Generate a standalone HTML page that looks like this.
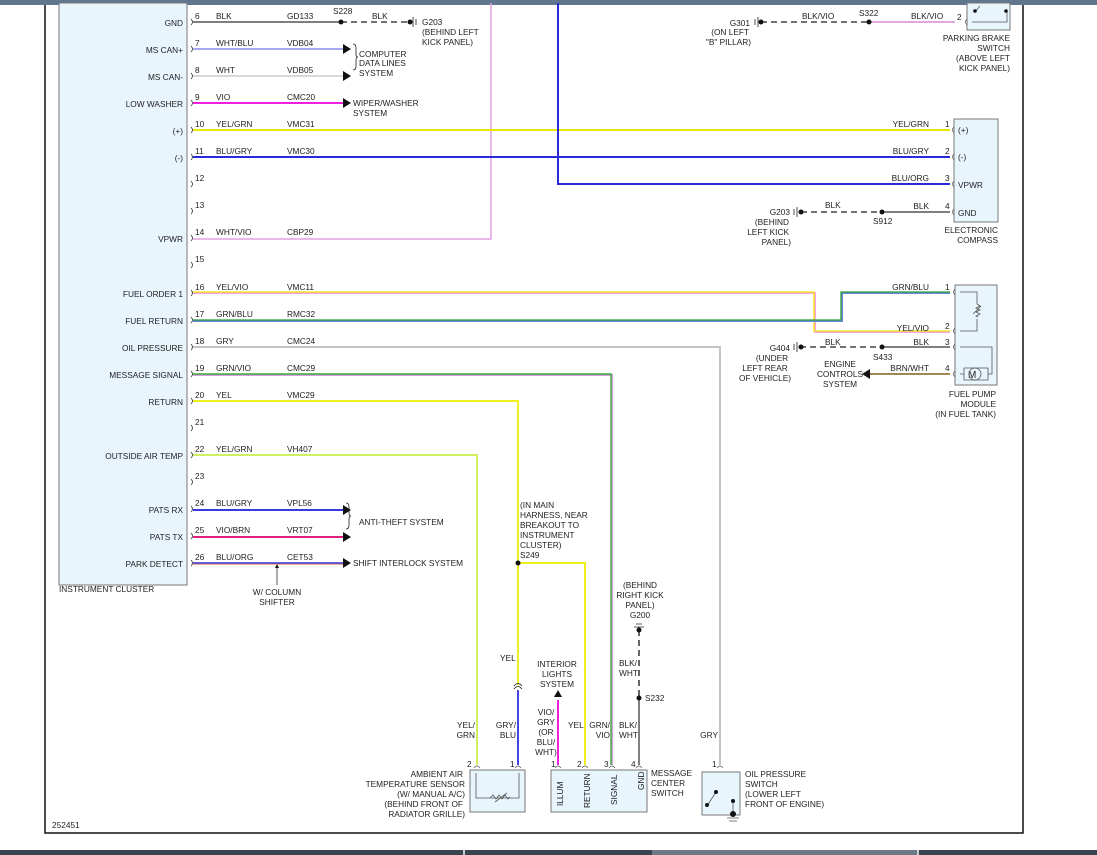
<!DOCTYPE html>
<html><head><meta charset="utf-8"><style>
html,body{margin:0;padding:0;background:#fff;}
svg{display:block;}
text{font-family:"Liberation Sans",Arial,sans-serif;font-size:8.3px;fill:#222;}
.r{text-anchor:end;}
.m{text-anchor:middle;}
</style></head><body>
<svg width="1097" height="855" viewBox="0 0 1097 855" xmlns="http://www.w3.org/2000/svg">
<rect x="0" y="0" width="1097" height="5" fill="#60768e"/>
<rect x="0" y="850" width="1097" height="5" fill="#3b4552"/>
<rect x="463" y="850" width="2" height="5" fill="#ccc"/>
<rect x="652" y="850" width="265" height="5" fill="#6d7a86"/>
<rect x="917" y="850" width="2" height="5" fill="#ccc"/>
<polyline points="45,5 45,833 1023,833 1023,5" fill="none" stroke="#111" stroke-width="1.5"/>
<rect x="59" y="3" width="128" height="582" fill="#e8f5fd" stroke="#777" stroke-width="1"/>
<text x="59" y="592">INSTRUMENT CLUSTER</text>
<g>
<text class="r" x="183" y="26">GND</text>
<text class="r" x="183" y="53">MS CAN+</text>
<text class="r" x="183" y="80">MS CAN-</text>
<text class="r" x="183" y="107">LOW WASHER</text>
<text class="r" x="183" y="134">(+)</text>
<text class="r" x="183" y="161">(-)</text>
<text class="r" x="183" y="242">VPWR</text>
<text class="r" x="183" y="297">FUEL ORDER 1</text>
<text class="r" x="183" y="324">FUEL RETURN</text>
<text class="r" x="183" y="351">OIL PRESSURE</text>
<text class="r" x="183" y="378">MESSAGE SIGNAL</text>
<text class="r" x="183" y="405">RETURN</text>
<text class="r" x="183" y="459">OUTSIDE AIR TEMP</text>
<text class="r" x="183" y="513">PATS RX</text>
<text class="r" x="183" y="540">PATS TX</text>
<text class="r" x="183" y="567">PARK DETECT</text>
</g>
<g fill="none" stroke="#333" stroke-width="0.8">
<path d="M191,19 q3,3 0,6 M191,46 q3,3 0,6 M191,73 q3,3 0,6 M191,100 q3,3 0,6 M191,127 q3,3 0,6 M191,154 q3,3 0,6 M191,181 q3,3 0,6 M191,208 q3,3 0,6 M191,235 q3,3 0,6 M191,262 q3,3 0,6 M191,290 q3,3 0,6 M191,317 q3,3 0,6 M191,344 q3,3 0,6 M191,371 q3,3 0,6 M191,398 q3,3 0,6 M191,425 q3,3 0,6 M191,452 q3,3 0,6 M191,479 q3,3 0,6 M191,506 q3,3 0,6 M191,533 q3,3 0,6 M191,560 q3,3 0,6"/>
</g>
<g>
<text x="195" y="19">6</text><text x="195" y="46">7</text><text x="195" y="73">8</text><text x="195" y="100">9</text><text x="195" y="127">10</text><text x="195" y="154">11</text><text x="195" y="181">12</text><text x="195" y="208">13</text><text x="195" y="235">14</text><text x="195" y="262">15</text><text x="195" y="290">16</text><text x="195" y="317">17</text><text x="195" y="344">18</text><text x="195" y="371">19</text><text x="195" y="398">20</text><text x="195" y="425">21</text><text x="195" y="452">22</text><text x="195" y="479">23</text><text x="195" y="506">24</text><text x="195" y="533">25</text><text x="195" y="560">26</text>
<text x="216" y="19">BLK</text><text x="287" y="19">GD133</text>
<text x="216" y="46">WHT/BLU</text><text x="287" y="46">VDB04</text>
<text x="216" y="73">WHT</text><text x="287" y="73">VDB05</text>
<text x="216" y="100">VIO</text><text x="287" y="100">CMC20</text>
<text x="216" y="127">YEL/GRN</text><text x="287" y="127">VMC31</text>
<text x="216" y="154">BLU/GRY</text><text x="287" y="154">VMC30</text>
<text x="216" y="235">WHT/VIO</text><text x="287" y="235">CBP29</text>
<text x="216" y="290">YEL/VIO</text><text x="287" y="290">VMC11</text>
<text x="216" y="317">GRN/BLU</text><text x="287" y="317">RMC32</text>
<text x="216" y="344">GRY</text><text x="287" y="344">CMC24</text>
<text x="216" y="371">GRN/VIO</text><text x="287" y="371">CMC29</text>
<text x="216" y="398">YEL</text><text x="287" y="398">VMC29</text>
<text x="216" y="452">YEL/GRN</text><text x="287" y="452">VH407</text>
<text x="216" y="506">BLU/GRY</text><text x="287" y="506">VPL56</text>
<text x="216" y="533">VIO/BRN</text><text x="287" y="533">VRT07</text>
<text x="216" y="560">BLU/ORG</text><text x="287" y="560">CET53</text>
</g>
<g fill="none" stroke-width="2">
<line x1="193" y1="22" x2="341" y2="22" stroke="#555" stroke-width="1.5"/>
<line x1="341" y1="22" x2="410" y2="22" stroke="#444" stroke-width="1.5" stroke-dasharray="6,4"/>
<line x1="193" y1="49" x2="343" y2="49" stroke="#8a8af0" stroke-width="1.5"/>
<line x1="193" y1="76" x2="343" y2="76" stroke="#ccc" stroke-width="1.5"/>
<line x1="193" y1="103" x2="343" y2="103" stroke="#f020e0"/>
<polyline points="193,239 491,239 491,3" stroke="#e4a2e4" stroke-width="1.5"/>
<line x1="193" y1="130" x2="950" y2="130" stroke="#e8e800"/>
<line x1="193" y1="157" x2="950" y2="157" stroke="#2a2ad8"/>
<polyline points="558,3 558,184 950,184" stroke="#2a2ad8"/>
<polyline points="193,293 815,293 815,332 950,332" stroke="#f5a0e8"/>
<polyline points="193,292 814,292 814,331 950,331" stroke="#f0e800" stroke-width="1.3"/>
<polyline points="193,321 842,321 842,293 950,293" stroke="#6a8ad8"/>
<polyline points="193,320 841,320 841,292 950,292" stroke="#2a9a3a" stroke-width="1.3"/>
<polyline points="193,347 720,347 720,765" stroke="#c4c4c4"/>
<polyline points="193,375 612,375 612,765" stroke="#d8a0e0"/>
<polyline points="193,374 611,374 611,765" stroke="#3aa83a" stroke-width="1.4"/>
<polyline points="193,401 518,401 518,685" stroke="#f0f020"/>
<polyline points="518,563 585,563 585,765" stroke="#f0f020"/>
<line x1="518" y1="690" x2="518" y2="765" stroke="#4444e0"/>
<polyline points="193,455 477,455 477,765" stroke="#d0f060"/>
<line x1="193" y1="510" x2="343" y2="510" stroke="#3a3ae0"/>
<line x1="193" y1="537" x2="343" y2="537" stroke="#e02080"/>
<line x1="193" y1="564" x2="343" y2="564" stroke="#f5b090"/>
<line x1="193" y1="563" x2="343" y2="563" stroke="#3030d8" stroke-width="1.4"/>
<line x1="558" y1="700" x2="558" y2="765" stroke="#f020e0"/>
<line x1="639" y1="630" x2="639" y2="698" stroke="#555" stroke-width="1.8" stroke-dasharray="6,4"/>
<line x1="639" y1="698" x2="639" y2="765" stroke="#555" stroke-width="1.5"/>
<line x1="761" y1="22" x2="869" y2="22" stroke="#444" stroke-width="1.5" stroke-dasharray="6,4"/>
<line x1="869" y1="22" x2="955" y2="22" stroke="#d070d0" stroke-width="1.3"/>
<line x1="801" y1="212" x2="882" y2="212" stroke="#444" stroke-width="1.5" stroke-dasharray="6,4"/>
<line x1="882" y1="212" x2="950" y2="212" stroke="#555" stroke-width="1.5"/>
<line x1="800" y1="347" x2="882" y2="347" stroke="#444" stroke-width="1.5" stroke-dasharray="6,4"/>
<line x1="882" y1="347" x2="950" y2="347" stroke="#555" stroke-width="1.5"/>
<line x1="870" y1="374" x2="950" y2="374" stroke="#a08850"/>
<line x1="277" y1="566" x2="277" y2="585" stroke="#333" stroke-width="0.8"/>
</g>
<g fill="#111">
<path d="M343,44 l8,5 l-8,5z M343,71 l8,5 l-8,5z M343,98 l8,5 l-8,5z M343,505 l8,5 l-8,5z M343,532 l8,5 l-8,5z M343,558 l8,5 l-8,5z"/>
<path d="M862,374 l8,-5 l0,10z"/>
<path d="M558,690 l-4,7 l8,0z"/>
<path d="M277,564 l-2,4 l4,0z"/>
<circle cx="341" cy="22" r="2.5"/><circle cx="869" cy="22" r="2.5"/><circle cx="882" cy="212" r="2.5"/><circle cx="882" cy="347" r="2.5"/><circle cx="518" cy="563" r="2.5"/><circle cx="639" cy="698" r="2.5"/><circle cx="639" cy="630" r="2.5"/>
<circle cx="410" cy="22" r="2.5"/><circle cx="761" cy="22" r="2.5"/><circle cx="801" cy="212" r="2.5"/><circle cx="801" cy="347" r="2.5"/>
</g>
<g stroke="#222" stroke-width="0.8" fill="none">
<path d="M413,17 v10 M416,19 v6 M758,17 v10 M755,19 v6 M797,207 v10 M794,209 v6 M797,342 v10 M794,344 v6 M634,627 h10 M636,624 h6"/>
<path d="M353,44 q3,0 3,4 v6 q0,3 2,3 q-2,0 -2,3 v6 q0,4 -3,4"/>
<path d="M346,503 q3,0 3,4 v6 q0,3 2,3 q-2,0 -2,3 v6 q0,4 -3,4"/>
<path d="M514,689 q4,-5 8,0 M514,686 q4,-5 8,0"/>
</g>
<g>
<text x="333" y="14">S228</text><text x="372" y="19">BLK</text>
<text x="422" y="25">G203</text><text x="422" y="35">(BEHIND LEFT</text><text x="422" y="45">KICK PANEL)</text>
<text x="359" y="57">COMPUTER</text><text x="359" y="66">DATA LINES</text><text x="359" y="76">SYSTEM</text>
<text x="353" y="106">WIPER/WASHER</text><text x="353" y="116">SYSTEM</text>
<text x="359" y="525">ANTI-THEFT SYSTEM</text>
<text x="353" y="566">SHIFT INTERLOCK SYSTEM</text>
<text class="m" x="277" y="595">W/ COLUMN</text><text class="m" x="277" y="605">SHIFTER</text>
<text x="52" y="828">252451</text>
<text x="520" y="508">(IN MAIN</text><text x="520" y="518">HARNESS, NEAR</text><text x="520" y="528">BREAKOUT TO</text><text x="520" y="538">INSTRUMENT</text><text x="520" y="548">CLUSTER)</text><text x="520" y="558">S249</text>
<text x="500" y="661">YEL</text>
<text class="m" x="557" y="667">INTERIOR</text><text class="m" x="557" y="677">LIGHTS</text><text class="m" x="557" y="687">SYSTEM</text>
<text class="m" x="640" y="588">(BEHIND</text><text class="m" x="640" y="598">RIGHT KICK</text><text class="m" x="640" y="608">PANEL)</text><text class="m" x="640" y="618">G200</text>
<text x="619" y="666">BLK/</text><text x="619" y="676">WHT</text>
<text x="645" y="701">S232</text>
<text class="r" x="475" y="728">YEL/</text><text class="r" x="475" y="738">GRN</text>
<text class="r" x="516" y="728">GRY/</text><text class="r" x="516" y="738">BLU</text>
<text class="m" x="546" y="715">VIO/</text><text class="m" x="546" y="725">GRY</text><text class="m" x="546" y="735">(OR</text><text class="m" x="546" y="745">BLU/</text><text class="m" x="546" y="755">WHT)</text>
<text x="568" y="728">YEL</text>
<text class="r" x="610" y="728">GRN/</text><text class="r" x="610" y="738">VIO</text>
<text x="619" y="728">BLK/</text><text x="619" y="738">WHT</text>
<text class="r" x="718" y="738">GRY</text>
<text x="802" y="19">BLK/VIO</text><text x="859" y="16">S322</text><text x="911" y="19">BLK/VIO</text>
<text class="r" x="750" y="26">G301</text><text class="r" x="749" y="35">(ON LEFT</text><text class="r" x="751" y="45">"B" PILLAR)</text>
<text class="r" x="1010" y="41">PARKING BRAKE</text><text class="r" x="1010" y="51">SWITCH</text><text class="r" x="1010" y="61">(ABOVE LEFT</text><text class="r" x="1010" y="71">KICK PANEL)</text>
<text class="r" x="929" y="127">YEL/GRN</text><text class="r" x="929" y="154">BLU/GRY</text><text class="r" x="929" y="181">BLU/ORG</text><text class="r" x="929" y="209">BLK</text><text x="825" y="208">BLK</text>
<text class="r" x="790" y="215">G203</text><text class="r" x="789" y="225">(BEHIND</text><text class="r" x="789" y="235">LEFT KICK</text><text class="r" x="791" y="245">PANEL)</text><text x="873" y="224">S912</text>
<text class="r" x="998" y="233">ELECTRONIC</text><text class="r" x="998" y="243">COMPASS</text>
<text class="r" x="929" y="290">GRN/BLU</text><text class="r" x="929" y="331">YEL/VIO</text><text class="r" x="929" y="345">BLK</text><text x="825" y="345">BLK</text><text class="r" x="929" y="371">BRN/WHT</text>
<text class="r" x="790" y="351">G404</text><text class="m" x="772" y="361">(UNDER</text><text class="m" x="765" y="371">LEFT REAR</text><text class="m" x="765" y="381">OF VEHICLE)</text><text x="873" y="360">S433</text>
<text class="m" x="840" y="367">ENGINE</text><text class="m" x="840" y="377">CONTROLS</text><text class="m" x="840" y="387">SYSTEM</text>
<text class="r" x="996" y="397">FUEL PUMP</text><text class="r" x="996" y="407">MODULE</text><text class="r" x="996" y="417">(IN FUEL TANK)</text>
<text x="945" y="127">1</text><text x="945" y="154">2</text><text x="945" y="181">3</text><text x="945" y="209">4</text>
<text x="945" y="290">1</text><text x="945" y="329">2</text><text x="945" y="345">3</text><text x="945" y="371">4</text><text x="957" y="20">2</text>
<text class="r" x="463" y="777">AMBIENT AIR</text><text class="r" x="465" y="787">TEMPERATURE SENSOR</text><text class="r" x="465" y="797">(W/ MANUAL A/C)</text><text class="r" x="463" y="807">(BEHIND FRONT OF</text><text class="r" x="465" y="817">RADIATOR GRILLE)</text>
<text x="651" y="776">MESSAGE</text><text x="651" y="786">CENTER</text><text x="651" y="796">SWITCH</text>
<text x="745" y="777">OIL PRESSURE</text><text x="745" y="787">SWITCH</text><text x="745" y="797">(LOWER LEFT</text><text x="745" y="807">FRONT OF ENGINE)</text>
<text x="467" y="767">2</text><text x="510" y="767">1</text><text x="551" y="767">1</text><text x="577" y="767">2</text><text x="604" y="767">3</text><text x="631" y="767">4</text><text x="712" y="767">1</text>
</g>
<g stroke="#777" stroke-width="1" fill="#e8f5fd">
<rect x="967" y="3" width="43" height="27"/>
<rect x="954" y="119" width="44" height="103"/>
<rect x="955" y="285" width="42" height="100"/>
<rect x="470" y="770" width="55" height="42"/>
<rect x="551" y="770" width="96" height="42"/>
<rect x="702" y="772" width="38" height="43"/>
</g>
<g>
<text x="958" y="133">(+)</text><text x="958" y="160">(-)</text><text x="958" y="188">VPWR</text><text x="958" y="216">GND</text>
<text transform="translate(563,806) rotate(-90)">ILLUM</text>
<text transform="translate(590,808) rotate(-90)">RETURN</text>
<text transform="translate(617,805) rotate(-90)">SIGNAL</text>
<text transform="translate(644,790) rotate(-90)">GND</text>
</g>
<g fill="none" stroke="#555" stroke-width="0.8">
<path d="M972,22 h35 v-12 M975,12 l5,-6"/>
<path d="M960,292 h17 v12 M960,331 h17 v-12 M977,304 l3,2 -4,2 4,2 -4,2 4,2 -4,2 2,1 M973,314 l8,-8"/>
<path d="M960,347 h32 v27 h-4 M960,374 h4 M964,368 h24 v12 h-24z"/>
<path d="M476,773 v25 h43 v-25 M490,798 l3,-3 3,4 3,-4 3,4 3,-4 3,4 2,-2 M495,802 l12,-9"/>
<path d="M707,806 l9,-14 M733,806 v-5 M733,806 v6 M727,818 h12 M729,821 h8"/>
</g>
<g fill="#111"><circle cx="975" cy="11" r="1.8"/><circle cx="1006" cy="11" r="1.8"/><circle cx="716" cy="792" r="2"/><circle cx="707" cy="805" r="2"/><circle cx="733" cy="801" r="2"/><circle cx="733" cy="814" r="3"/>
<text x="968" y="378" style="font-size:10px">M</text></g>
<circle cx="975" cy="374" r="6" fill="none" stroke="#555" stroke-width="0.8"/>
<g fill="none" stroke="#555" stroke-width="0.7">
<path d="M954,127 q-3,3 0,6 M954,154 q-3,3 0,6 M954,181 q-3,3 0,6 M954,209 q-3,3 0,6 M955,289 q-3,3 0,6 M955,328 q-3,3 0,6 M955,344 q-3,3 0,6 M955,371 q-3,3 0,6 M967,19 q-3,3 0,6"/>
<path d="M474,768 q3,-4 6,0 M515,768 q3,-4 6,0 M555,768 q3,-4 6,0 M582,768 q3,-4 6,0 M609,768 q3,-4 6,0 M636,768 q3,-4 6,0 M717,768 q3,-4 6,0"/>
</g>
</svg>
</body></html>
